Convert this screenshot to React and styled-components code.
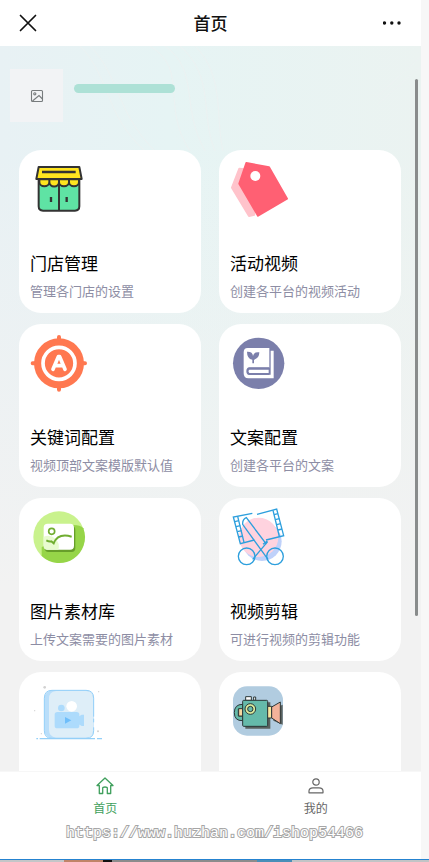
import React from 'react'
import styled, { createGlobalStyle } from 'styled-components'

const GlobalStyle = createGlobalStyle`
  * {
    box-sizing: border-box;
  }
  body {
    margin: 0;
    background: #f7f7f7;
    font-family: "Noto Sans CJK SC", sans-serif;
  }
`

const Page = styled.div`
  position: relative;
  display: flex;
  flex-direction: column;
  height: 100vh;
  padding-right: 8px;
  overflow: hidden;
`

const Header = styled.header`
  display: flex;
  align-items: center;
  justify-content: space-between;
  flex: none;
  height: 46px;
  padding: 0 18px;
  background: #fff;
`

const HeaderTitle = styled.h1`
  margin: 0;
  font-size: 17px;
  font-weight: 500;
  line-height: 24px;
  color: #111;
`

const IconButton = styled.button`
  display: flex;
  padding: 0;
  border: 0;
  background: none;
`

const Body = styled.div`
  position: relative;
  display: flex;
  flex: 1;
  min-height: 0;
  background: #f2f2f2;
`

const Backdrop = styled.svg`
  position: absolute;
  inset: 0;
  width: 100%;
  height: 100%;
`

const Content = styled.main`
  position: relative;
  flex: 1;
  padding: 23px 20px 20px 19px;
  overflow-y: auto;
  scrollbar-width: none;
`

const ScrollThumb = styled.div`
  position: absolute;
  top: 33px;
  right: 3px;
  width: 3px;
  height: 74%;
  border-radius: 2px;
  background: #898c8c;
`

const Profile = styled.div`
  display: flex;
  gap: 11px;
  margin: 0 0 28px -9px;
`

const Avatar = styled.div`
  display: flex;
  align-items: center;
  justify-content: center;
  width: 53px;
  height: 53px;
  background: #f2f3f5;
`

const NameBar = styled.div`
  width: 101px;
  height: 9px;
  margin-top: 15px;
  border-radius: 5px;
  background: #ade1d6;
`

const CardGrid = styled.div`
  display: grid;
  grid-template-columns: 1fr 1fr;
  gap: 11px 18px;
`

const Card = styled.a`
  display: flex;
  flex-direction: column;
  align-items: flex-start;
  min-height: 163px;
  padding: 10px 11px 11px;
  border-radius: 22px;
  background: #fff;
  color: #000;
  text-decoration: none;
`

const CardIcon = styled.svg`
  width: 60px;
  height: 60px;
  overflow: visible;
`

const CardTitle = styled.h2`
  margin: 31px 0 6px;
  font-size: 17px;
  font-weight: 400;
  line-height: 24px;
`

const CardText = styled.p`
  margin: 0;
  font-size: 13px;
  line-height: 20px;
  color: #8d8da4;
  white-space: nowrap;
`

const TabBar = styled.nav`
  display: flex;
  flex: none;
  height: 88px;
  border-top: 1px solid #f7f7f7;
  background: #fff;
`

const Tab = styled.a`
  display: flex;
  flex: 1;
  flex-direction: column;
  align-items: center;
  gap: 3px;
  padding-top: 4px;
  font-size: 12px;
  line-height: 18px;
  color: ${props => (props.$active ? '#3f9f5c' : '#666')};
  text-decoration: none;
`

const Watermark = styled.div`
  position: absolute;
  right: 0;
  bottom: 18px;
  left: 0;
  font-family: "Liberation Mono", monospace;
  font-size: 15px;
  line-height: 20px;
  text-align: center;
  color: #fff;
  -webkit-text-stroke: 2px #a6a6a6;
  paint-order: stroke fill;
  pointer-events: none;
`

const BottomStrip = styled.div`
  flex: none;
  height: 3px;
  margin-right: -8px;
  border-top: 1px solid #2583d0;
  background: linear-gradient(
    90deg,
    #c4c6c8 0 15%,
    #c08468 15% 24%,
    #111 24% 26%,
    #8c8c8c 26% 60%,
    #4a8fb8 60% 68%,
    #c2c4c6 68%
  );
`

const StoreIcon = () => (
  <CardIcon viewBox="60 45 180 180" stroke="#333" strokeWidth="6" strokeLinejoin="round">
    <path d="M86 103H208V184Q208 197 195 197H99Q86 197 86 184Z" fill="#5fe3a4" />
    <path d="M147 110V197" />
    <path d="M88 103h30v8a15 13 0 0 1-30 0zM118 103h29v8a14 13 0 0 1-29 0zM147 103h30v8a15 13 0 0 1-30 0zM177 103h30v8a15 13 0 0 1-30 0z" fill="#ffe51f" />
    <path d="M86 66H208L215 102H79Z" fill="#ffe51f" />
    <path d="M96 81H197M123 156V171M170 156V171" fill="none" strokeWidth="7" />
  </CardIcon>
)

const TagIcon = () => (
  <CardIcon viewBox="60 45 180 180" strokeLinejoin="round" strokeWidth="6">
    <path d="M88 71L120 74L133 209L117 213L66 128Z" fill="#ffc3cb" stroke="#ffc3cb" />
    <path d="M109 54L177 67L231 161L144 212L88 116Z" fill="#ff6073" stroke="#ff6073" />
    <circle cx="136" cy="93" r="15" fill="#fff" />
  </CardIcon>
)

const TargetIcon = () => (
  <CardIcon viewBox="60 42 180 180" fill="none" strokeLinecap="round" strokeLinejoin="round">
    <path d="M147 51V209M68 130H225" stroke="#ff7850" strokeWidth="12" />
    <circle cx="147" cy="130" r="75" fill="#ff7850" />
    <circle cx="147" cy="130" r="48" stroke="#fff" strokeWidth="11" />
    <path d="M129 148L145 110H149L165 148M136 137H158" stroke="#fff" strokeWidth="11" />
  </CardIcon>
)

const BookIcon = () => (
  <CardIcon viewBox="60 42 180 180">
    <circle cx="146" cy="130" r="77" fill="#7b7fab" />
    <path d="M113 84H178V143H118Q111 143 111 154Q111 164 118 164H182V92H191V175H115Q101 175 101 160V97Q101 84 113 84Z" fill="#fff" />
    <path d="M178 142H118Q109 143 109 154T118 165H178V158H120Q116 158 116 154T120 149H178Z" fill="#7b7fab" />
    <path d="M118 149H176V159H118Q113 154 118 149Z" fill="#fff" />
    <path d="M111 95Q128 94 129 108Q131 95 148 97Q148 115 132 119V130H127V119Q111 116 111 95Z" fill="#7b7fab" />
  </CardIcon>
)

const PictureIcon = () => (
  <CardIcon viewBox="60 42 180 180" fill="none">
    <circle cx="147" cy="129" r="77" fill="#c9f28d" />
    <path d="M190 93Q211 93 220 103A77 77 0 0 1 95 186V160Z" fill="#96d548" />
    <rect x="104" y="96" width="92" height="78" rx="12" fill="#679e2a" />
    <rect x="101" y="89" width="91" height="78" rx="12" fill="#fff" />
    <path d="M101 128Q121 120 136 134Q151 148 145 167H113Q101 167 101 155Z" fill="#e8fbcf" />
    <circle cx="125" cy="112" r="9" stroke="#70ad30" strokeWidth="5" />
    <path d="M109 139Q118 144 124 142L131 148Q144 116 185 128" stroke="#70ad30" strokeWidth="6" />
  </CardIcon>
)

const ScissorsIcon = () => (
  <CardIcon viewBox="60 42 180 180" fill="none" stroke="#2d9fdd" strokeWidth="4">
    <circle cx="156" cy="142" r="59" fill="#bfd1fa" stroke="none" />
    <circle cx="146" cy="130" r="59" fill="#ffd3df" stroke="none" />
    <path d="M127 58L70 69L91 149L133 138M141 61L200 45L221 125L168 138" />
    <path d="M83 67L102 145M189 49L208 127" />
    <path d="M74 83L87 80M78 98L91 95M82 113L95 110M86 129L99 126M192 62L204 59M196 77L208 74M200 92L212 89M204 108L216 105" />
    <path d="M105 101L98 91Q97 76 109 71L168 149L173 143L128 196M105 101L174 196M159 151L172 141" />
    <circle cx="110" cy="187" r="25" />
    <circle cx="195" cy="187" r="25" />
  </CardIcon>
)

const VideoIcon = () => (
  <CardIcon viewBox="60 54 180 180">
    <rect x="103" y="79" width="148" height="144" rx="24" fill="#b9defa" />
    <path d="M138 81H228Q249 81 249 103V200Q249 221 228 221H138Q117 218 117 198V104Q117 83 138 81Z" fill="#deeef8" />
    <path d="M251 158V103Q251 79 228 79H126Q103 79 103 103V200Q103 223 126 223H228Q251 223 251 200V190M251 164V175" fill="none" stroke="#93cff8" strokeWidth="3" />
    <path d="M79 224H84M89 224H255M261 224H276" stroke="#93cff8" strokeWidth="4" />
    <circle cx="154" cy="132" r="10" fill="#addbfc" />
    <circle cx="185" cy="127" r="16" fill="#fff" />
    <rect x="134" y="144" width="74" height="49" rx="8" fill="#addbfc" />
    <path d="M205 158L215 152H222V186H215L205 180Z" fill="#addbfc" />
    <path d="M165 159L184 169L165 179Z" fill="#6ebefb" />
    <g fill="#d2d2d2">
      <circle cx="104" cy="70" r="4" />
      <circle cx="264" cy="202" r="3" />
      <circle cx="266" cy="83" r="2" />
      <circle cx="74" cy="140" r="2" />
      <circle cx="94" cy="209" r="2" />
    </g>
  </CardIcon>
)

const CameraIcon = () => (
  <CardIcon viewBox="60 54 180 180" stroke="#2c3838" strokeWidth="3" strokeLinejoin="round">
    <rect x="69" y="67" width="150" height="148" rx="42" fill="#b1cce0" stroke="none" />
    <path d="M106 115H181V194H106ZM192 133L218 122V182L190 170Z" fill="#59615f" stroke="none" />
    <path d="M98 121Q73 121 73 146T98 170V156H85V135H98Z" fill="#65baaa" />
    <path d="M98 134H86V156H98Z" fill="#f9d9a0" />
    <path d="M107 109V98H124V109ZM131 109V99H137V109Z" fill="#fff" />
    <rect x="98" y="109" width="75" height="78" rx="3" fill="#65baaa" />
    <circle cx="121" cy="135" r="16" fill="#dceb9c" />
    <circle cx="121" cy="135" r="8" fill="#65baaa" />
    <path d="M173 127H185V162H173Z" fill="#fbe79e" />
    <path d="M185 129L211 114V179L185 162Z" fill="#f3b29a" />
  </CardIcon>
)

const HomeIcon = () => (
  <svg width="20" height="20" viewBox="0 0 20 20" fill="none" stroke="currentColor" strokeWidth="1.3" strokeLinejoin="round">
    <path d="M2 9.5L10 2L18 9.5H15.7V17.5H12.3V12Q12.3 11 10 11T7.7 12V17.5H4.3V9.5Z" />
  </svg>
)

const UserIcon = () => (
  <svg width="20" height="20" viewBox="0 0 20 20" fill="none" stroke="currentColor" strokeWidth="1.2" strokeLinejoin="round">
    <circle cx="10" cy="6" r="3.2" />
    <path d="M3 16.8V15Q3 11.8 7 11.8H13Q17 11.8 17 15V16.8Z" />
  </svg>
)

const cards = [
  { icon: StoreIcon, title: '门店管理', text: '管理各门店的设置' },
  { icon: TagIcon, title: '活动视频', text: '创建各平台的视频活动' },
  { icon: TargetIcon, title: '关键词配置', text: '视频顶部文案模版默认值' },
  { icon: BookIcon, title: '文案配置', text: '创建各平台的文案' },
  { icon: PictureIcon, title: '图片素材库', text: '上传文案需要的图片素材' },
  { icon: ScissorsIcon, title: '视频剪辑', text: '可进行视频的剪辑功能' },
  { icon: VideoIcon },
  { icon: CameraIcon },
]

export default function App() {
  return (
    <Page>
      <GlobalStyle />
      <Header>
        <IconButton type="button" aria-label="关闭">
          <svg width="20" height="20" viewBox="0 0 20 20" stroke="#111" strokeWidth="1.7" strokeLinecap="round">
            <path d="M2.5 2.5L17.5 17.5M17.5 2.5L2.5 17.5" />
          </svg>
        </IconButton>
        <HeaderTitle>首页</HeaderTitle>
        <IconButton type="button" aria-label="更多">
          <svg width="20" height="20" viewBox="0 0 20 20" fill="#111">
            <circle cx="1.5" cy="10" r="1.7" />
            <circle cx="8.8" cy="10" r="1.7" />
            <circle cx="16" cy="10" r="1.7" />
          </svg>
        </IconButton>
      </Header>
      <Body>
        <Backdrop viewBox="0 0 421 725" preserveAspectRatio="none" fill="none">
          <defs>
            <linearGradient id="tint">
              <stop offset="0" stopColor="#e8f1f4" />
              <stop offset="0.4" stopColor="#e6f4f4" />
              <stop offset="1" stopColor="#ebf3f1" />
            </linearGradient>
            <linearGradient id="fade" x2="0" y2="1">
              <stop offset="0.15" stopColor="#f2f2f2" stopOpacity="0" />
              <stop offset="0.75" stopColor="#f2f2f2" />
            </linearGradient>
          </defs>
          <rect width="421" height="725" fill="url(#tint)" />
          <path d="M80 0C110 30 105 70 145 105M90 0C120 30 115 65 155 105M150 0C190 25 160 60 190 105M165 0C200 25 180 60 205 105M180 0C215 30 200 70 215 105M195 0C225 30 215 70 223 105M421 10L378 50M421 20L378 58" stroke="#ecf2f2" />
          <rect width="421" height="725" fill="url(#fade)" />
        </Backdrop>
        <Content>
          <Profile>
            <Avatar>
              <svg width="14" height="14" viewBox="0 0 14 14" fill="none" stroke="#777b7d" strokeWidth="1.1">
                <rect x="1.5" y="1.5" width="11" height="11" rx="1" />
                <circle cx="4.8" cy="4.8" r="1.1" />
                <path d="M2.5 12L9 6.5L12.5 10" />
              </svg>
            </Avatar>
            <NameBar />
          </Profile>
          <CardGrid>
            {cards.map(({ icon: Icon, title, text }, index) => (
              <Card href="#" key={index}>
                <Icon />
                {title && <CardTitle>{title}</CardTitle>}
                {text && <CardText>{text}</CardText>}
              </Card>
            ))}
          </CardGrid>
        </Content>
        <ScrollThumb />
      </Body>
      <TabBar>
        <Tab href="#" $active>
          <HomeIcon />
          首页
        </Tab>
        <Tab href="#">
          <UserIcon />
          我的
        </Tab>
      </TabBar>
      <BottomStrip />
      <Watermark>https://www.huzhan.com/ishop54466</Watermark>
    </Page>
  )
}
